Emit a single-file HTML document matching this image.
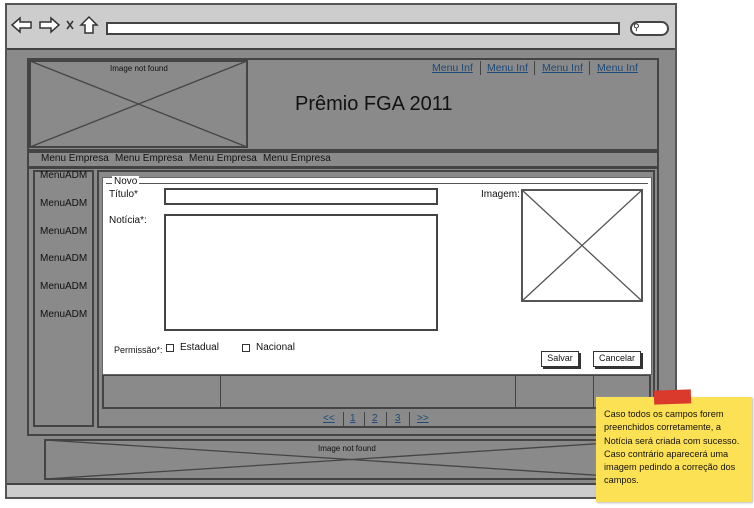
<!DOCTYPE html>
<html><head><meta charset="utf-8"><style>
*{margin:0;padding:0;box-sizing:border-box}
body{width:754px;height:508px;background:#fff;position:relative;overflow:hidden;font-family:"Liberation Sans",sans-serif;font-size:10px;color:#111}
.a{position:absolute}
.b{border:2px solid #444}
.t{position:absolute;white-space:nowrap;font-size:10px}
.lnk{color:#1d4a78;text-decoration:underline}
</style></head><body>
<div class="a" style="left:5px;top:3px;width:672px;height:496px;background:#cdcdcd;border:2px solid #555"></div>
<div class="a" style="left:7px;top:48px;width:668px;height:437px;background:#8a8a8a;border-top:2px solid #444;border-bottom:2px solid #444"></div>
<svg class="a" style="left:10px;top:14px" width="95" height="24" viewBox="0 0 95 24" fill="#fff" stroke="#333" stroke-width="1.5">
<path d="M2 11 L10 4 L10 8 L21 8 L21 14 L10 14 L10 18 Z"/>
<path d="M49 11 L41 4 L41 8 L30 8 L30 14 L41 14 L41 18 Z"/>
<path d="M57 7 L63 15 M63 7 L57 15" fill="none"/>
<path d="M71 11 L79 3 L87 11 L83 11 L83 19 L75 19 L75 11 Z"/>
</svg>
<div class="a" style="left:106px;top:22px;width:514px;height:13px;background:#fff;border:2px solid #444"></div>
<div class="a" style="left:630px;top:21px;width:39px;height:15px;background:#fff;border:2px solid #444;border-radius:8px"></div>
<div class="t" style="left:633px;top:22px;font-size:9px">&#9906;</div>

<div class="a b" style="left:27px;top:58px;width:632px;height:93px"></div>
<svg class="a" style="left:29px;top:60px" width="219" height="88"><rect x="1" y="1" width="217" height="86" fill="none" stroke="#444" stroke-width="2"/><path d="M1 1 L218 87 M218 1 L1 87" stroke="#444" stroke-width="1.3"/></svg>
<div class="t" style="left:110px;top:64px;font-size:8px">Image not found</div>
<div class="t" style="left:295px;top:93px;font-size:20px">Prêmio FGA 2011</div>
<div class="t lnk" style="left:432px;top:62px;font-size:10.5px">Menu Inf</div>
<div class="a" style="left:480px;top:61px;width:1px;height:14px;background:#444"></div>
<div class="t lnk" style="left:487px;top:62px;font-size:10.5px">Menu Inf</div>
<div class="a" style="left:534px;top:61px;width:1px;height:14px;background:#444"></div>
<div class="t lnk" style="left:542px;top:62px;font-size:10.5px">Menu Inf</div>
<div class="a" style="left:589px;top:61px;width:1px;height:14px;background:#444"></div>
<div class="t lnk" style="left:597px;top:62px;font-size:10.5px">Menu Inf</div>

<div class="a b" style="left:27px;top:151px;width:632px;height:17px"></div>
<div class="t" style="left:41px;top:153px">Menu Empresa</div>
<div class="t" style="left:115px;top:153px">Menu Empresa</div>
<div class="t" style="left:189px;top:153px">Menu Empresa</div>
<div class="t" style="left:263px;top:153px">Menu Empresa</div>

<div class="a b" style="left:27px;top:167px;width:632px;height:269px"></div>
<div class="a b" style="left:33px;top:170px;width:61px;height:257px"></div>
<div class="t" style="left:40px;top:170px">MenuADM</div>
<div class="t" style="left:40px;top:198px">MenuADM</div>
<div class="t" style="left:40px;top:226px">MenuADM</div>
<div class="t" style="left:40px;top:253px">MenuADM</div>
<div class="t" style="left:40px;top:281px">MenuADM</div>
<div class="t" style="left:40px;top:309px">MenuADM</div>
<div class="a" style="left:97px;top:170px;width:558px;height:258px;border:2px solid #444"></div>

<div class="a" style="left:102px;top:374px;width:549px;height:35px;border:2px solid #444;background:#8a8a8a"></div>
<div class="a" style="left:220px;top:375px;width:1px;height:33px;background:#444"></div>
<div class="a" style="left:515px;top:375px;width:1px;height:33px;background:#444"></div>
<div class="a" style="left:593px;top:375px;width:1px;height:33px;background:#444"></div>
<div class="t lnk" style="left:323px;top:413px">&lt;&lt;</div>
<div class="a" style="left:343px;top:412px;width:1px;height:14px;background:#444"></div>
<div class="t lnk" style="left:350px;top:413px">1</div>
<div class="a" style="left:364px;top:412px;width:1px;height:14px;background:#444"></div>
<div class="t lnk" style="left:372px;top:413px">2</div>
<div class="a" style="left:386px;top:412px;width:1px;height:14px;background:#444"></div>
<div class="t lnk" style="left:395px;top:413px">3</div>
<div class="a" style="left:409px;top:412px;width:1px;height:14px;background:#444"></div>
<div class="t lnk" style="left:417px;top:413px">&gt;&gt;</div>

<div class="a" style="left:102px;top:177px;width:550px;height:198px;background:#fff;border:1px solid #666"></div>
<div class="a" style="left:106px;top:183px;width:542px;height:1px;background:#555"></div>
<div class="t" style="left:112px;top:176px;background:#fff;padding:0 2px">Novo</div>
<div class="t" style="left:109px;top:189px">Título*</div>
<div class="a" style="left:164px;top:188px;width:274px;height:17px;border:2px solid #444"></div>
<div class="t" style="left:109px;top:215px">Notícia*:</div>
<div class="a" style="left:164px;top:214px;width:274px;height:117px;border:2px solid #444"></div>
<div class="t" style="left:481px;top:189px">Imagem:</div>
<svg class="a" style="left:521px;top:189px" width="122" height="113"><rect x="1" y="1" width="120" height="111" fill="none" stroke="#555" stroke-width="2"/><path d="M1 1 L121 112 M121 1 L1 112" stroke="#555" stroke-width="1.3"/></svg>
<div class="t" style="left:114px;top:345px;font-size:9px">Permissão*:</div>
<div class="a" style="left:166px;top:344px;width:8px;height:8px;border:1px solid #333"></div>
<div class="t" style="left:180px;top:342px">Estadual</div>
<div class="a" style="left:242px;top:344px;width:8px;height:8px;border:1px solid #333"></div>
<div class="t" style="left:256px;top:342px">Nacional</div>
<div class="a" style="left:541px;top:351px;width:38px;height:16px;border:1.5px solid #333;box-shadow:2px 2px 0 #333;text-align:center;font-size:9px;line-height:13px">Salvar</div>
<div class="a" style="left:593px;top:351px;width:48px;height:16px;border:1.5px solid #333;box-shadow:2px 2px 0 #333;text-align:center;font-size:9px;line-height:13px">Cancelar</div>

<svg class="a" style="left:44px;top:439px" width="613" height="42"><rect x="1" y="1" width="611" height="39" fill="none" stroke="#444" stroke-width="2"/><path d="M1 1 L612 40 M612 1 L1 40" stroke="#444" stroke-width="1.3"/></svg>
<div class="t" style="left:318px;top:444px;font-size:8px">Image not found</div>

<div class="a" style="left:596px;top:397px;width:156px;height:105px;background:#fde155;box-shadow:1px 1px 2px #bbb"></div>
<div class="a" style="left:654px;top:390px;width:37px;height:14px;background:#d93a2b;transform:rotate(-2deg)"></div>
<div class="a" style="left:604px;top:408px;width:148px;font-size:9.2px;line-height:13.3px;white-space:normal">Caso todos os campos forem preenchidos corretamente, a Notícia será criada com sucesso. Caso contrário aparecerá uma imagem pedindo a correção dos campos.</div>
</body></html>
